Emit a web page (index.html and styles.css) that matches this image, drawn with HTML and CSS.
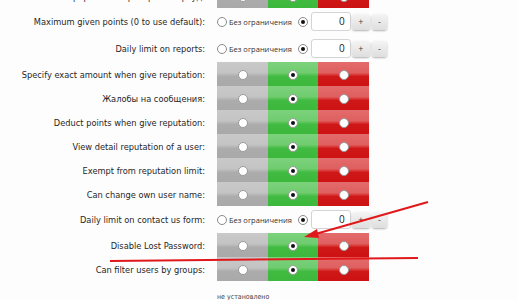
FILE: index.html
```html
<!DOCTYPE html>
<html lang="ru">
<head>
    <meta charset="UTF-8">
    <title>Права группы</title>
    <link rel="stylesheet" href="styles.css">
</head>
<body>
    <div class="page">
        <table class="perms">
            <colgroup>
                <col class="col-lbl">
                <col class="col-c">
                <col class="col-g">
                <col class="col-c">
            </colgroup>
            <tr class="opt">
                <td class="lbl">Игнорирование проверки на флуд:</td>
                <td class="c gray"><span class="rb"></span></td>
                <td class="c green"><span class="rb on"></span></td>
                <td class="c red"><span class="rb"></span></td>
            </tr>
            <tr class="num">
                <td class="lbl">Maximum given points (0 to use default):</td>
                <td colspan="3">
                    <div class="limit">
                        <span class="rb"></span><span class="nolimit">Без ограничения</span>
                        <span class="rb on"></span>
                        <span class="box">0</span>
                        <span class="btn">+</span><span class="btn">-</span>
                    </div>
                </td>
            </tr>
            <tr class="num">
                <td class="lbl">Daily limit on reports:</td>
                <td colspan="3">
                    <div class="limit">
                        <span class="rb"></span><span class="nolimit">Без ограничения</span>
                        <span class="rb on"></span>
                        <span class="box">0</span>
                        <span class="btn">+</span><span class="btn">-</span>
                    </div>
                </td>
            </tr>
            <tr class="opt">
                <td class="lbl">Specify exact amount when give reputation:</td>
                <td class="c gray"><span class="rb"></span></td>
                <td class="c green"><span class="rb on"></span></td>
                <td class="c red"><span class="rb"></span></td>
            </tr>
            <tr class="opt">
                <td class="lbl">Жалобы на сообщения:</td>
                <td class="c gray"><span class="rb"></span></td>
                <td class="c green"><span class="rb on"></span></td>
                <td class="c red"><span class="rb"></span></td>
            </tr>
            <tr class="opt">
                <td class="lbl">Deduct points when give reputation:</td>
                <td class="c gray"><span class="rb"></span></td>
                <td class="c green"><span class="rb on"></span></td>
                <td class="c red"><span class="rb"></span></td>
            </tr>
            <tr class="opt">
                <td class="lbl">View detail reputation of a user:</td>
                <td class="c gray"><span class="rb"></span></td>
                <td class="c green"><span class="rb on"></span></td>
                <td class="c red"><span class="rb"></span></td>
            </tr>
            <tr class="opt">
                <td class="lbl">Exempt from reputation limit:</td>
                <td class="c gray"><span class="rb"></span></td>
                <td class="c green"><span class="rb on"></span></td>
                <td class="c red"><span class="rb"></span></td>
            </tr>
            <tr class="opt">
                <td class="lbl">Can change own user name:</td>
                <td class="c gray"><span class="rb"></span></td>
                <td class="c green"><span class="rb on"></span></td>
                <td class="c red"><span class="rb"></span></td>
            </tr>
            <tr class="num">
                <td class="lbl">Daily limit on contact us form:</td>
                <td colspan="3">
                    <div class="limit">
                        <span class="rb"></span><span class="nolimit">Без ограничения</span>
                        <span class="rb on"></span>
                        <span class="box">0</span>
                        <span class="btn">+</span><span class="btn">-</span>
                    </div>
                </td>
            </tr>
            <tr class="opt">
                <td class="lbl">Disable Lost Password:</td>
                <td class="c gray"><span class="rb"></span></td>
                <td class="c green"><span class="rb on"></span></td>
                <td class="c red"><span class="rb"></span></td>
            </tr>
            <tr class="opt">
                <td class="lbl">Can filter users by groups:</td>
                <td class="c gray"><span class="rb"></span></td>
                <td class="c green"><span class="rb on"></span></td>
                <td class="c red"><span class="rb"></span></td>
            </tr>
        </table>
        <div class="note">не установлено</div>

        <svg class="marks" width="518" height="300" viewBox="0 0 518 300">
            <line x1="428" y1="202" x2="312" y2="235" stroke="#e0181b" stroke-width="2" />
            <polygon points="304,237 317,229 319,238" fill="#e0181b" />
            <line x1="110" y1="261" x2="418" y2="258" stroke="#e0181b" stroke-width="2" />
        </svg>
    </div>
</body>
</html>
```

FILE: styles.css
```css
body {
    margin: 0;
    background: #fdfdfd;
    font-family: "DejaVu Sans Condensed", "DejaVu Sans", sans-serif;
    overflow: hidden;
}
.page {
    position: relative;
    width: 518px;
    height: 300px;
    overflow: hidden;
}
.perms {
    border-collapse: collapse;
    table-layout: fixed;
    width: 369px;
    margin-top: -16px;
}
.col-lbl {
    width: 217px;
}
.col-c {
    width: 51px;
}
.col-g {
    width: 50px;
}
.perms td {
    padding: 0;
}
.perms td.lbl {
    padding-right: 12px;
    text-align: right;
    font-size: 9.2px;
    color: #262626;
    white-space: nowrap;
}
.opt td {
    height: 24px;
}
.num td {
    height: 27px;
}
.c {
    text-align: center;
    vertical-align: middle;
}
.gray {
    background: linear-gradient(#c9c9c9 0%, #c3c3c3 45%, #acacac 60%, #a9a9a9 100%);
}
.green {
    background: linear-gradient(#7cd27c 0%, #6fcc6f 45%, #41bb41 60%, #3cb83c 100%);
}
.red {
    background: linear-gradient(#e46c6c 0%, #df5f5f 45%, #d01818 60%, #cc1212 100%);
}
.rb {
    display: inline-block;
    box-sizing: border-box;
    width: 10px;
    height: 10px;
    border: 1px solid #8a8a8a;
    border-radius: 50%;
    background: #fff;
    vertical-align: middle;
    position: relative;
    flex: none;
}
.rb.on::after {
    content: "";
    position: absolute;
    left: 2px;
    top: 2px;
    width: 4px;
    height: 4px;
    border-radius: 50%;
    background: #111;
}
.c .rb {
    border-color: #999;
}
.limit {
    display: flex;
    align-items: center;
    white-space: nowrap;
}
.nolimit {
    font-family: "Open Sans", sans-serif;
    font-size: 7.5px;
    color: #333;
    margin-left: 2px;
    margin-right: 6px;
}
.box {
    box-sizing: border-box;
    flex: none;
    width: 40px;
    height: 19px;
    margin-left: 3px;
    padding-right: 5px;
    border: 1px solid #d4d4d4;
    border-radius: 3px;
    background: #fff;
    text-align: right;
    font-family: "Open Sans", sans-serif;
    font-size: 10px;
    line-height: 17px;
    color: #222;
}
.btn {
    box-sizing: border-box;
    flex: none;
    width: 18px;
    height: 16px;
    margin-left: 1px;
    border-radius: 3px;
    background: linear-gradient(#f4f4f4, #dedede);
    box-shadow: 0 1px 2px rgba(0, 0, 0, 0.3);
    text-align: center;
    font-family: "Open Sans", sans-serif;
    font-size: 9px;
    line-height: 15px;
    color: #444;
}
.btn + .btn {
    width: 15px;
    margin-left: 2px;
}
.note {
    margin: 12px 0 0 217px;
    font-size: 7px;
    color: #444;
}
.marks {
    position: absolute;
    top: 0;
    left: 0;
    pointer-events: none;
}
```
